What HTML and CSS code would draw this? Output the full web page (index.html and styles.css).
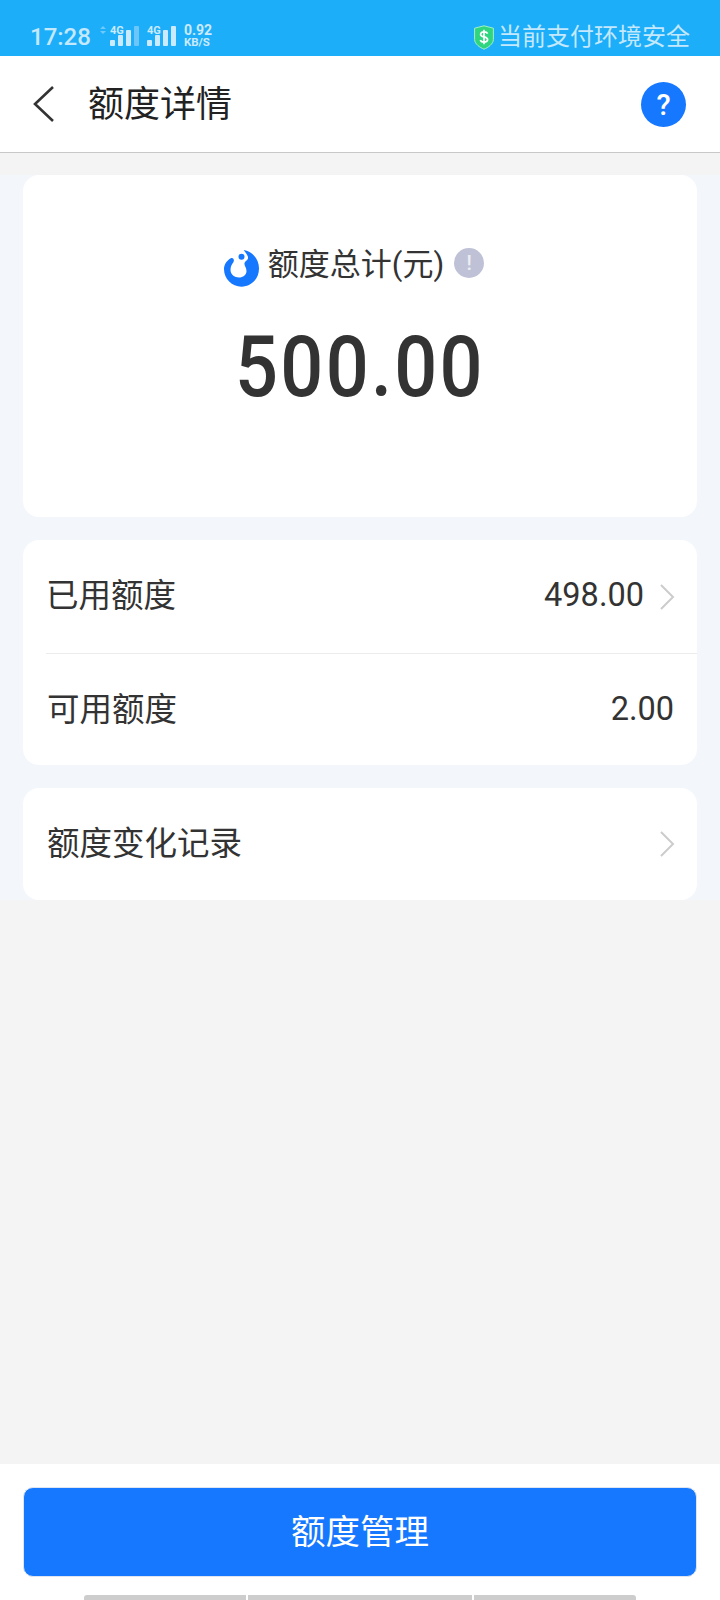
FILE: index.html
```html
<!DOCTYPE html>
<html lang="zh-CN">

<head>
    <meta charset="UTF-8">
    <meta name="viewport" content="width=device-width, initial-scale=1.0">
    <title>额度详情</title>
    <link rel="stylesheet" href="styles.css">
</head>

<body>
    <div class="page">
        <div class="status-bar">
            <div class="status-left">
                <span class="status-time">17:28</span>
                <svg class="status-signals" width="87" height="24" viewBox="0 0 87 24">
                    <path d="M3 4 L6 1 L9 4 Z M3 6 L9 6 L6 9 Z" fill="#6fc9fa" />
                    <text x="13" y="9" class="status-net">4G</text>
                    <rect x="13" y="15" width="5" height="6" rx="1" fill="#cbeafd" />
                    <rect x="21" y="10" width="5" height="11" rx="1" fill="#cbeafd" />
                    <rect x="29" y="5" width="5" height="16" rx="1" fill="#cbeafd" />
                    <rect x="37" y="1" width="5" height="20" rx="1" fill="#6cc6fa" />
                    <text x="50" y="9" class="status-net">4G</text>
                    <rect x="50" y="15" width="5" height="6" rx="1" fill="#cbeafd" />
                    <rect x="58" y="10" width="5" height="11" rx="1" fill="#cbeafd" />
                    <rect x="66" y="5" width="5" height="16" rx="1" fill="#cbeafd" />
                    <rect x="74" y="1" width="5" height="20" rx="1" fill="#cbeafd" />
                </svg>
                <div class="status-speed"><span>0.92</span><span class="status-unit">KB/S</span></div>
            </div>
            <div class="status-safe">
                <svg width="20" height="25" viewBox="0 0 20 25">
                    <path d="M10 .8 L19.4 3.2 V14.5 C19.4 19 14 22.6 10 24.2 C6 22.6 .6 19 .6 14.5 V3.2 Z" fill="#2fd67f" stroke="#a5efc8" stroke-width="1" />
                    <path d="M13.6 8.6 C13 7.2 11.6 6.8 10 6.8 C8 6.8 6.6 7.8 6.6 9.4 C6.6 12.8 13.6 11 13.6 14.6 C13.6 16.2 12 17.2 10 17.2 C8.2 17.2 6.8 16.6 6.2 15.2 M10 4.8 V19.2" fill="none" stroke="#fff" stroke-width="1.7" />
                </svg>
                <span>当前支付环境安全</span>
            </div>
        </div>

        <div class="header">
            <svg class="back-icon" width="24" height="38" viewBox="0 0 24 38">
                <path d="M21 2 L3 19 L21 36" fill="none" stroke="#333" stroke-width="2.6" />
            </svg>
            <div class="header-title">额度详情</div>
            <div class="help-btn">?</div>
        </div>

        <div class="gap-strip"></div>

        <div class="content">
            <div class="card total-card">
                <div class="total-label">
                    <svg class="total-logo" width="35" height="38" viewBox="0 0 35 38">
                        <path d="M19.7 1 C28 2 35 10 35 19.5 C35 30 27 37.7 17.5 37.7 C8 37.7 0 30 0 20 C0 15.5 3 11 7.4 9 C9.5 8.5 10.5 11 9.5 13 C7.5 15.5 6.5 18 6.5 21 C6.5 25.5 10.5 28.5 15 28.5 C19 28.5 22.5 26 22.5 22 C22.5 18.5 20 17 20.5 14 C21 12 23.5 11.5 24 9.5 C24.5 6.5 21.5 4 19.7 1 Z" fill="#1677ff" />
                        <circle cx="17.5" cy="7.7" r="3" fill="#1677ff" />
                    </svg>
                    <span>额度总计(元)</span>
                    <span class="info-dot">!</span>
                </div>
                <div class="total-amount">500.00</div>
            </div>

            <div class="card">
                <div class="row row-line">
                    <span class="row-label">已用额度</span>
                    <div class="row-value">
                        <span>498.00</span>
                        <svg class="row-arrow" width="16" height="26" viewBox="0 0 16 26">
                            <path d="M2 1 L14 13 L2 25" fill="none" stroke="#ccc" stroke-width="2" />
                        </svg>
                    </div>
                </div>
                <div class="row row-short">
                    <span class="row-label">可用额度</span>
                    <div class="row-value"><span>2.00</span></div>
                </div>
            </div>

            <div class="card">
                <div class="row">
                    <span class="row-label">额度变化记录</span>
                    <svg class="row-arrow" width="16" height="26" viewBox="0 0 16 26">
                        <path d="M2 1 L14 13 L2 25" fill="none" stroke="#ccc" stroke-width="2" />
                    </svg>
                </div>
            </div>
        </div>

        <div class="spacer"></div>

        <div class="footer">
            <div class="main-btn">额度管理</div>
            <div class="nav-bar">
                <span class="nav-seg nav-seg-a"></span>
                <span class="nav-seg nav-seg-b"></span>
                <span class="nav-seg nav-seg-c"></span>
            </div>
        </div>
    </div>
</body>

</html>
```

FILE: styles.css
```css
* {
    box-sizing: border-box;
}

body {
    margin: 0;
    font-family: Roboto, "Noto Sans CJK SC", sans-serif;
    background-color: #f4f4f4;
    color: #333;
}

.page {
    display: flex;
    flex-direction: column;
    height: 1600px;
    overflow: hidden;
}

.status-bar {
    height: 56px;
    flex: none;
    background-color: #1caef8;
    display: flex;
    justify-content: space-between;
    align-items: flex-end;
    padding: 0 30px 4px 30px;
}

.status-left {
    display: flex;
    align-items: center;
}

.status-time {
    font-size: 24px;
    font-weight: 500;
    color: #c4e8fd;
    line-height: 30px;
}

.status-signals {
    margin-left: 6px;
}

.status-net {
    font-size: 11px;
    font-weight: 700;
    fill: #cbeafd;
}

.status-speed {
    display: flex;
    flex-direction: column;
    margin-top: -2px;
    color: #cbeafd;
    font-size: 14px;
    font-weight: 700;
    line-height: 13px;
}

.status-unit {
    font-size: 11.5px;
    line-height: 11px;
}

.status-safe {
    display: flex;
    align-items: center;
    gap: 4px;
    font-size: 24px;
    line-height: 30px;
    color: #c4e8fd;
}

.header {
    height: 97px;
    flex: none;
    background-color: #fff;
    border-bottom: 1px solid #c8c8c8;
    display: flex;
    align-items: center;
    padding: 0 34px 0 32px;
}

.header-title {
    flex: 1;
    margin: -6px 0 0 32px;
    font-size: 36px;
    color: #222;
}

.help-btn {
    width: 45px;
    height: 45px;
    border-radius: 50%;
    background-color: #1677ff;
    color: #fff;
    font-size: 29px;
    font-weight: 500;
    line-height: 47px;
    text-align: center;
}

.gap-strip {
    height: 22px;
    flex: none;
}

.content {
    flex: none;
    background-color: #f3f6fb;
    padding: 0 23px;
    display: flex;
    flex-direction: column;
    gap: 23px;
}

.card {
    background-color: #fff;
    border-radius: 16px;
}

.total-card {
    height: 342px;
    padding-top: 68px;
    display: flex;
    flex-direction: column;
    align-items: center;
}

.total-label {
    display: flex;
    align-items: center;
    padding-right: 12px;
    font-size: 31px;
    line-height: 44px;
}

.total-logo {
    margin-right: 9px;
    margin-top: 6px;
}

.info-dot {
    width: 30px;
    height: 30px;
    margin-left: 10px;
    margin-top: -4px;
    border-radius: 50%;
    background-color: #bfc2d6;
    color: #eceef4;
    font-size: 20px;
    font-weight: 500;
    line-height: 30px;
    text-align: center;
}

.total-amount {
    margin-top: 30px;
    font-size: 86px;
    font-weight: 500;
    line-height: 100px;
    letter-spacing: 2.6px;
    transform: scaleX(0.88);
}

.row {
    height: 112px;
    display: flex;
    justify-content: space-between;
    align-items: center;
    padding: 0 23px 0 24px;
    font-size: 32.5px;
}

.row-label {
    margin-top: -8px;
}

.row-line {
    height: 114px;
    border-bottom: 1px solid #ececec;
    margin-left: 23px;
    padding-left: 0;
}

.row-short {
    height: 111px;
}

.row-short .row-label {
    margin-top: -6px;
}

.row-value {
    display: flex;
    align-items: center;
    margin-top: -4px;
}

.row-short .row-value {
    margin-top: -2px;
}

.row-arrow {
    flex: none;
    margin-right: -1px;
}

.row-value .row-arrow {
    margin-left: 15px;
    margin-top: 4px;
}

.spacer {
    flex: 1;
}

.footer {
    flex: none;
    height: 136px;
    background-color: #fff;
    padding-top: 23px;
}

.main-btn {
    height: 90px;
    margin: 0 23px;
    border: 1px solid #dfe6f2;
    border-radius: 10px;
    background-color: #1677ff;
    color: #fff;
    font-size: 34.5px;
    line-height: 89px;
    text-align: center;
}

.nav-bar {
    display: flex;
    gap: 2px;
    margin: 18px 84px 0 84px;
}

.nav-seg {
    height: 5px;
    background-color: #cdcdcd;
}

.nav-seg-a {
    width: 162px;
    border-radius: 3px 0 0 0;
}

.nav-seg-b {
    width: 224px;
}

.nav-seg-c {
    width: 162px;
    border-radius: 0 3px 0 0;
}
```
